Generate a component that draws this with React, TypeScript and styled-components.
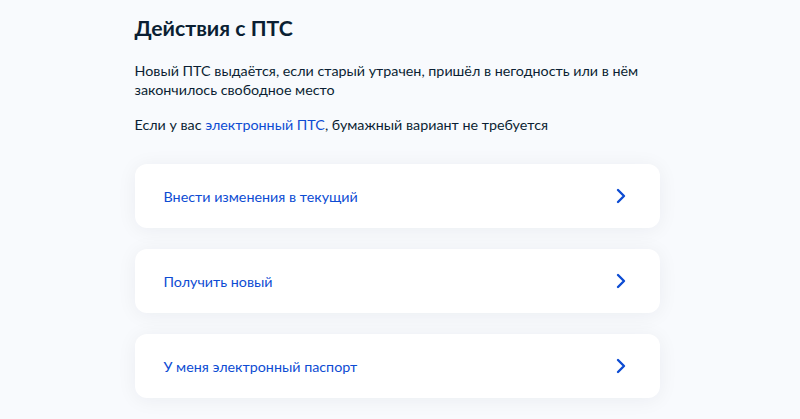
import styled, { createGlobalStyle } from 'styled-components';

const GlobalStyle = createGlobalStyle`
  body {
    margin: 0;
    background: #f8fafd;
    font-family: Lato, 'Noto Sans', sans-serif;
    color: #0b1f33;
  }
`;

const actions = ['Внести изменения в текущий', 'Получить новый', 'У меня электронный паспорт'];

const Chevron = () => (
  <svg width='12' height='16' viewBox='0 0 12 16' fill='none'>
    <path d='M3 2l6 6-6 6' stroke='#0d4cd3' strokeWidth='2.4' strokeLinecap='round' strokeLinejoin='round' />
  </svg>
);

const App = () => {
  return (
    <>
      <GlobalStyle />
      <Wrapper>
        <Title>Действия с ПТС</Title>
        <Text>
          Новый ПТС выдаётся, если старый утрачен, пришёл в негодность или в нём закончилось свободное место
        </Text>
        <Text>
          Если у вас <Link href='#'>электронный ПТС</Link>, бумажный вариант не требуется
        </Text>
        <List>
          {actions.map((item) => (
            <Card key={item} href='#'>
              <span>{item}</span>
              <Chevron />
            </Card>
          ))}
        </List>
      </Wrapper>
    </>
  );
};

const Wrapper = styled.main`
  width: 525px;
  margin: 0 auto;
  padding: 14px 0 20px 0;
  position: relative;
  left: -3px;
`;

const Title = styled.h2`
  margin: 0 0 19px;
  font-size: 21.3px;
  line-height: 28px;
  font-weight: 700;
`;

const Text = styled.p`
  margin: 0 0 16px;
  font-size: 14.3px;
  line-height: 19px;
`;

const Link = styled.a`
  color: #0d4cd3;
  text-decoration: none;
`;

const List = styled.div`
  display: flex;
  flex-direction: column;
  gap: 21px;
  margin-top: 30px;
`;

const Card = styled.a`
  display: flex;
  align-items: center;
  justify-content: space-between;
  height: 64px;
  padding: 0 33px 0 29px;
  background: #fff;
  border-radius: 12px;
  box-shadow: 0 2px 20px rgba(11, 31, 51, 0.06);
  color: #0d4cd3;
  text-decoration: none;
  font-size: 14.3px;
`;

export default App;
